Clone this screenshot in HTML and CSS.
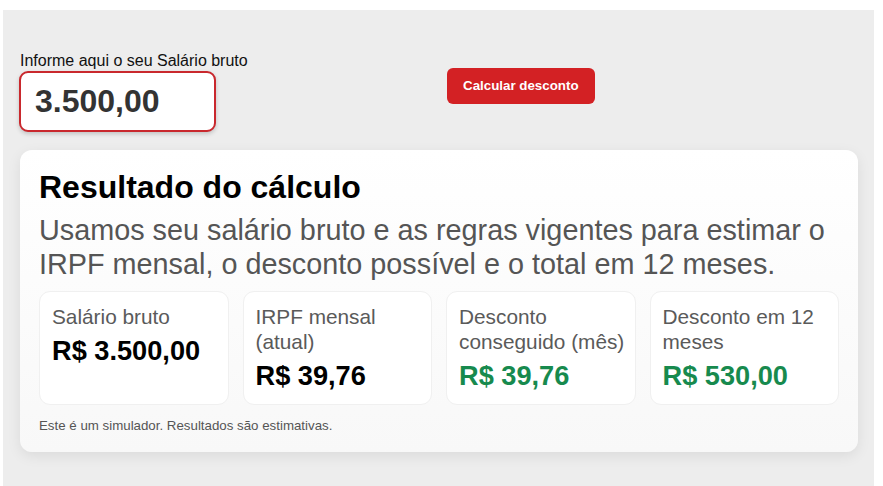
FILE: index.html
```html
<!DOCTYPE html>
<html lang="pt-BR">
<head>
<meta charset="utf-8">
<title>Simulador IRPF</title>
<link rel="stylesheet" href="styles.css">
</head>
<body>
<div class="wrap">
  <div class="top">
    <div class="field">
      <label class="label" for="sal">Informe aqui o seu Salário bruto</label>
      <input id="sal" class="input" type="text" value="3.500,00">
    </div>
    <div class="action">
      <button class="btn" type="button">Calcular desconto</button>
    </div>
  </div>
  <section class="card">
    <h2 class="title">Resultado do cálculo</h2>
    <p class="sub">Usamos seu salário bruto e as regras vigentes para estimar o IRPF mensal, o desconto possível e o total em 12 meses.</p>
    <div class="stats">
      <div class="stat">
        <div class="stat-label">Salário bruto</div>
        <div class="stat-value">R$ 3.500,00</div>
      </div>
      <div class="stat">
        <div class="stat-label">IRPF mensal (atual)</div>
        <div class="stat-value">R$ 39,76</div>
      </div>
      <div class="stat">
        <div class="stat-label">Desconto conseguido (mês)</div>
        <div class="stat-value green">R$ 39,76</div>
      </div>
      <div class="stat">
        <div class="stat-label">Desconto em 12 meses</div>
        <div class="stat-value green">R$ 530,00</div>
      </div>
    </div>
    <p class="note">Este é um simulador. Resultados são estimativas.</p>
  </section>
</div>
</body>
</html>
```

FILE: styles.css
```css
* { box-sizing: border-box; }
html, body { margin: 0; padding: 0; background: #ffffff; }
body {
  font-family: "Liberation Sans", Arial, sans-serif;
  color: #111;
}
.wrap {
  margin: 10px 9px 0 3px;
  background: #ededed;
  padding: 42px 16px 30px 17px;
  min-height: calc(100vh - 10px);
}
.top {
  display: grid;
  grid-template-columns: 1fr 1fr;
  gap: 16px;
}
.field { display: flex; flex-direction: column; }
.label {
  display: block;
  font-size: 16px;
  line-height: 18.4px;
  color: #111;
  margin-bottom: 1px;
}
.input {
  width: 197px;
  margin-left: -1px;
  font-family: "Liberation Sans", Arial, sans-serif;
  font-size: 32px;
  font-weight: 700;
  line-height: 37px;
  color: #333;
  padding: 10px 14px;
  border: 2px solid #c9282d;
  border-radius: 9px;
  background: #fff;
  box-shadow: 0 2px 4px rgba(0,0,0,0.18);
  outline: none;
}
.action { align-self: start; margin-top: 16px; }
.btn {
  font-family: "Liberation Sans", Arial, sans-serif;
  font-size: 13.333px;
  font-weight: 700;
  color: #fff;
  background: #d32124;
  border: 0;
  border-radius: 6px;
  padding: 10px 16px;
  line-height: 16px;
  height: 36px;
}
.card {
  margin-top: 18px;
  background: linear-gradient(#ffffff, #f8f8f8);
  border-radius: 12px;
  padding: 19px 19px 19px 19px;
  box-shadow: 0 4px 14px rgba(0,0,0,0.08);
}
.title {
  margin: 0;
  font-size: 32px;
  line-height: 37px;
  font-weight: 700;
  color: #000;
}
.sub {
  margin: 7px 0 0;
  font-size: 28.8px;
  line-height: 34px;
  color: #555;
}
.stats {
  margin-top: 10px;
  display: grid;
  grid-template-columns: repeat(4, 1fr);
  gap: 14px;
}
.stat {
  background: #fff;
  border: 1px solid #f0f0f0;
  border-radius: 11px;
  padding: 12px 4px 12px 12px;
  display: flex;
  flex-direction: column;
  gap: 6px;
  min-height: 112px;
}
.stat-label {
  font-size: 20.8px;
  line-height: 25px;
  color: #5a5a5a;
}
.stat-value {
  font-size: 27.2px;
  line-height: 32px;
  font-weight: 700;
  color: #000;
}
.stat-value.green { color: #178a4e; }
.note {
  margin: 13px 0 0;
  font-size: 13.3px;
  line-height: 15px;
  color: #555;
}
```
